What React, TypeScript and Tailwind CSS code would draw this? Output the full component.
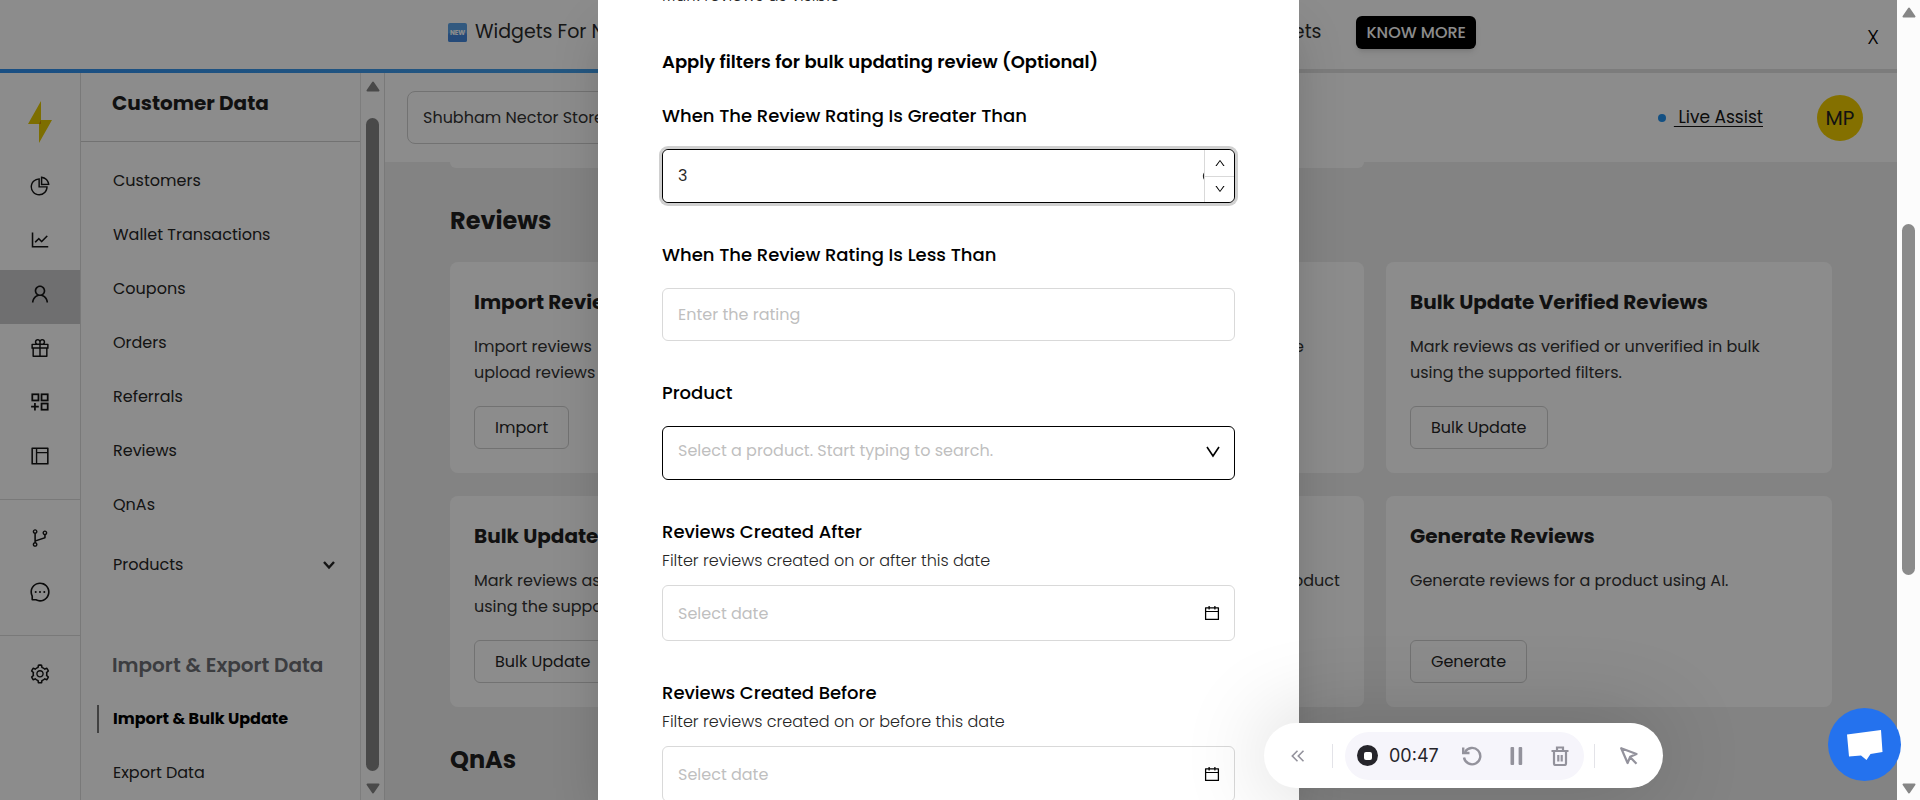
import React from "react";
import {
  AiOutlinePieChart,
  AiOutlineLineChart,
  AiOutlineUser,
  AiOutlineGift,
  AiOutlineLayout,
  AiOutlineBranches,
  AiOutlineMessage,
  AiOutlineSetting,
  AiOutlineCalendar,
  AiOutlineUp,
  AiOutlineDown,
  AiFillCloseCircle,
} from "react-icons/ai";

type IconType = React.ComponentType<{ className?: string; style?: React.CSSProperties }>;

function AppsIcon() {
  return (
    <svg viewBox="0 0 20 20" className="size-[22px] text-[#141414]" fill="none" stroke="currentColor" strokeWidth="1.6" aria-hidden="true">
      <rect x="3" y="3" width="5.6" height="5.6" />
      <rect x="11.4" y="3" width="5.6" height="5.6" />
      <rect x="11.4" y="11.4" width="5.6" height="5.6" />
      <path d="M5.4 10.8 V17.8 M1.9 14.3 H8.9" />
    </svg>
  );
}

function RailItem({ icon: Icon, label, active }: { icon: IconType; label: string; active?: boolean }) {
  return (
    <a
      href="#"
      aria-label={label}
      className={`flex h-[54px] w-full shrink-0 items-center justify-center pb-1.5 ${active ? "bg-[#cbcacd]" : ""}`}
    >
      <Icon className="size-[22px] text-[#141414]" />
    </a>
  );
}

function Rail() {
  return (
    <nav aria-label="Main" className="flex w-[81px] shrink-0 flex-col border-r border-[#dcdcdc]">
      <div className="flex h-[89px] shrink-0 items-center justify-center pt-2">
        <svg viewBox="0 0 24 42" className="h-[42px] w-6" aria-hidden="true">
          <path d="M13 0 L0 23 H11 L11 42 L24 19 H13 Z" fill="#e4c800" />
          <path d="M13 19 V23 H11 Z" fill="#d08a00" />
        </svg>
      </div>
      <div className="flex flex-col border-b border-[#dcdcdc] pb-[13px]">
        <RailItem icon={AiOutlinePieChart} label="Overview" />
        <RailItem icon={AiOutlineLineChart} label="Analytics" />
        <RailItem icon={AiOutlineUser} label="Customers" active />
        <RailItem icon={AiOutlineGift} label="Rewards" />
        <RailItem icon={AppsIcon} label="Apps" />
        <RailItem icon={AiOutlineLayout} label="Layout" />
      </div>
      <div className="flex flex-col border-b border-[#dcdcdc] pt-[14px] pb-[13px]">
        <RailItem icon={AiOutlineBranches} label="Workflows" />
        <RailItem icon={AiOutlineMessage} label="Messages" />
      </div>
      <div className="flex flex-col pt-[14px]">
        <RailItem icon={AiOutlineSetting} label="Settings" />
      </div>
    </nav>
  );
}

function MenuItem({ children }: { children: React.ReactNode }) {
  return (
    <a href="#" className="flex h-[54px] shrink-0 items-center pl-8 text-[#262626]">
      {children}
    </a>
  );
}

function ScrollArrow({ down }: { down?: boolean }) {
  return (
    <svg viewBox="0 0 14 11" className={`h-[11px] w-3.5 shrink-0 ${down ? "rotate-180" : ""}`} aria-hidden="true">
      <path d="M7 1.5 L12.5 9.5 H1.5 Z" fill="#868686" stroke="#868686" strokeWidth="2" strokeLinejoin="round" />
    </svg>
  );
}

function SideMenu() {
  return (
    <div className="flex w-[304px] shrink-0 border-r border-[#dcdcdc]">
      <nav aria-label="Customer data" className="flex min-w-0 grow flex-col text-base">
        <h2 className="flex h-[69px] shrink-0 items-center border-b border-[#cfcfcf] pb-2 pl-[31px] text-xl font-bold text-[#1f1f1f]">
          Customer Data
        </h2>
        <div className="flex flex-col pt-3">
          <MenuItem>Customers</MenuItem>
          <MenuItem>Wallet Transactions</MenuItem>
          <MenuItem>Coupons</MenuItem>
          <MenuItem>Orders</MenuItem>
          <MenuItem>Referrals</MenuItem>
          <MenuItem>Reviews</MenuItem>
          <MenuItem>QnAs</MenuItem>
          <button type="button" className="flex h-[66px] shrink-0 items-center justify-between pr-6 pl-8 text-[#262626]">
            Products
            <svg viewBox="0 0 14 10" className="h-2.5 w-3.5" fill="none" stroke="#262626" strokeWidth="2.4" aria-hidden="true">
              <path d="M2 2 L7 7.5 L12 2" />
            </svg>
          </button>
        </div>
        <h3 className="mt-10 flex h-[54px] shrink-0 items-center pl-[31px] text-xl font-semibold text-[#6d7075]">
          Import &amp; Export Data
        </h3>
        <a href="#" aria-current="page" className="flex h-[54px] shrink-0 items-center pl-4 font-bold text-black">
          <span className="flex h-7 items-center border-l-2 border-[#777] pl-3.5">Import &amp; Bulk Update</span>
        </a>
        <MenuItem>Export Data</MenuItem>
      </nav>
      <div className="flex w-6 shrink-0 flex-col items-center border-l border-[#e4e4e4] pt-2 pb-1.5">
        <ScrollArrow />
        <div className="mt-[26px] mb-3 w-[13px] grow rounded-full bg-[#868686]" />
        <ScrollArrow down />
      </div>
    </div>
  );
}

function Banner() {
  return (
    <div className="flex shrink-0 flex-col">
      <div className="flex h-[69px] items-center px-4">
        <div className="flex grow items-center justify-between pr-[405px] pl-[432px] pb-1">
          <p className="flex items-center gap-2 text-[19px] whitespace-nowrap text-[#2b2b2b]">
            <svg viewBox="0 0 19 19" className="size-[19px]" aria-hidden="true">
              <rect width="19" height="19" rx="2" fill="#5ba3e8" />
              <rect y="10" width="19" height="9" rx="2" fill="#4488dd" />
              <text x="9.5" y="12" textAnchor="middle" fontSize="6.5" fontWeight="700" fill="#fff">NEW</text>
            </svg>
            Widgets For New Pages
          </p>
          <p className="flex items-center gap-[35px] text-[19px] text-[#2b2b2b]">
            Widgets
            <button type="button" className="h-[33px] rounded-md bg-black px-2.5 text-base font-medium text-white shadow-md">
              KNOW MORE
            </button>
          </p>
        </div>
        <button type="button" aria-label="Close announcement" className="-ml-4 flex w-4 items-center justify-center pt-1 text-xl font-light">
          X
        </button>
      </div>
      <div className="h-1 bg-[#e2e2e2]">
        <div className="h-full w-1/2 bg-linear-to-r from-[#2f90ee] to-[#50a8e8]" />
      </div>
    </div>
  );
}

function Card({ title, text, action }: { title: string; text: string; action: string }) {
  return (
    <article className="flex h-[211px] flex-col items-start rounded-lg bg-white p-6">
      <h3 className="text-xl leading-8 font-bold whitespace-nowrap text-[#1f1f1f]">{title}</h3>
      <p className="mt-4 grow text-base leading-[26px] whitespace-pre-line text-[#333]">{text}</p>
      <button type="button" className="h-[43px] rounded-md border border-[#d0d0d0] px-5 text-base text-[#262626]">
        {action}
      </button>
    </article>
  );
}

function Content() {
  return (
    <div className="flex min-w-0 grow flex-col bg-[#efefef]">
      <header className="flex h-[89px] shrink-0 items-center justify-between bg-white pr-[34px] pl-[22px]">
        <select
          aria-label="Store"
          className="h-[53px] w-80 appearance-none rounded-lg border border-[#d0d0d0] bg-white px-[15px] text-base text-[#333]"
        >
          <option>Shubham Nector Store</option>
        </select>
        <div className="flex items-center">
          <span className="mr-2 size-2 rounded-full bg-[#2492ee]" />
          <a href="#" className="text-[17px] whitespace-pre text-[#141414] underline underline-offset-3"> Live Assist</a>
          <span className="ml-[54px] flex size-[46px] items-center justify-center rounded-full bg-[#f0cd00] text-xl text-[#222]">MP</span>
        </div>
      </header>
      <main className="flex flex-col px-[65px]">
        <div className="grid grid-cols-3 gap-[22px]">
          <div className="h-1.5 rounded-b-lg bg-white" />
          <div className="h-1.5 rounded-b-lg bg-white" />
        </div>
        <h2 className="flex h-[94px] items-center pt-3 text-2xl font-bold text-[#1f1f1f]">Reviews</h2>
        <div className="grid grid-cols-3 gap-x-[22px] gap-y-[23px]">
          <Card title="Import Reviews" text={"Import reviews\nupload reviews file"} action="Import" />
          <Card title="Export Reviews" text={"Export reviews in bulk and download it as one\nfile."} action="Export" />
          <Card
            title="Bulk Update Verified Reviews"
            text={"Mark reviews as verified or unverified in bulk\nusing the supported filters."}
            action="Bulk Update"
          />
          <Card title="Bulk Update" text={"Mark reviews as visible\nusing the supported filters."} action="Bulk Update" />
          <Card title="Move Reviews" text="Move or copy reviews in bulk into another product" action="Move" />
          <Card title="Generate Reviews" text="Generate reviews for a product using AI." action="Generate" />
        </div>
        <h2 className="flex h-[94px] items-center pt-3 text-2xl font-bold text-[#1f1f1f]">QnAs</h2>
      </main>
    </div>
  );
}

const labelClass = "block text-lg leading-7 font-medium text-black";
const hintClass = "text-base leading-6 font-light text-[#262626]";
const fieldClass = "w-full rounded-md border border-[#d9d9d9] bg-white px-[15px] text-base placeholder:text-[#bfbfbf]";

function DateField({ id, label, hint }: { id: string; label: string; hint: string }) {
  return (
    <div className="flex flex-col">
      <label htmlFor={id} className={labelClass}>{label}</label>
      <p className={`mt-[3px] ${hintClass}`}>{hint}</p>
      <div className="relative mt-3">
        <input id={id} placeholder="Select date" className={`h-14 ${fieldClass}`} />
        <AiOutlineCalendar className="absolute top-[19px] right-[14px] size-[18px] text-black" />
      </div>
    </div>
  );
}

function Dialog() {
  return (
    <div
      role="dialog"
      aria-label="Bulk update reviews"
      className="flex h-full w-[701px] shrink-0 flex-col gap-[38px] overflow-hidden bg-white px-16 shadow-2xl"
    >
      <div className="-mt-4 flex flex-col">
        <p className={hintClass}>Mark reviews as visible</p>
        <h2 className="mt-10 text-lg leading-7 font-semibold text-black">Apply filters for bulk updating review (Optional)</h2>
        <label htmlFor="greater" className={`mt-[26px] ${labelClass}`}>When The Review Rating Is Greater Than</label>
        <div className="relative mt-[19px] flex h-[54px] rounded-md border border-black shadow-[0_0_0_3px_#d0d0d0]">
          <input
            id="greater"
            type="number"
            defaultValue={3}
            className="min-w-0 grow [appearance:textfield] rounded-l-md bg-white px-[15px] text-base text-[#262626] outline-none"
          />
          <AiFillCloseCircle className="absolute top-[19px] right-[18px] size-3.5 text-[#222]" />
          <div className="relative flex w-[30px] flex-col rounded-r-md border-l border-[#d9d9d9] bg-white">
            <button type="button" aria-label="Increase" className="flex grow items-center justify-center border-b border-[#d9d9d9]">
              <AiOutlineUp className="size-3" />
            </button>
            <button type="button" aria-label="Decrease" className="flex grow items-center justify-center">
              <AiOutlineDown className="size-3" />
            </button>
          </div>
        </div>
      </div>
      <div className="flex flex-col">
        <label htmlFor="less" className={labelClass}>When The Review Rating Is Less Than</label>
        <input id="less" placeholder="Enter the rating" className={`mt-[19px] h-[53px] ${fieldClass}`} />
      </div>
      <div className="flex flex-col">
        <label htmlFor="product" className={labelClass}>Product</label>
        <div className="relative mt-[19px]">
          <select
            id="product"
            className="h-[54px] w-full appearance-none rounded-md border border-black bg-white px-[15px] pb-1 text-base text-[#bfbfbf]"
          >
            <option>Select a product. Start typing to search.</option>
          </select>
          <svg
            viewBox="0 0 14 12"
            className="pointer-events-none absolute top-5 right-[15px] h-3 w-3.5"
            fill="none"
            stroke="#000"
            strokeWidth="1.6"
            aria-hidden="true"
          >
            <path d="M1 1 L7 10 L13 1" />
          </svg>
        </div>
      </div>
      <DateField id="after" label="Reviews Created After" hint="Filter reviews created on or after this date" />
      <DateField id="before" label="Reviews Created Before" hint="Filter reviews created on or before this date" />
    </div>
  );
}

function Recorder() {
  return (
    <div className="fixed right-[257px] bottom-3 z-20 flex h-[65px] w-[399px] items-center rounded-full bg-white text-[#93929c] shadow-[0_0_90px_rgba(0,0,0,0.2)]">
      <button type="button" aria-label="Collapse" className="flex w-[68px] justify-center">
        <svg viewBox="0 0 14 12" className="h-3 w-3.5" fill="none" stroke="currentColor" strokeWidth="1.6" aria-hidden="true">
          <path d="M6.5 0.8 L1.3 6 L6.5 11.2 M12.5 0.8 L7.3 6 L12.5 11.2" />
        </svg>
      </button>
      <span className="h-6 w-px bg-[#e3e3e8]" />
      <div className="ml-3 flex h-12 w-[239px] items-center rounded-full bg-[#f6f5fb] pl-3">
        <button type="button" aria-label="Stop" className="flex size-[21px] items-center justify-center rounded-full bg-[#26252b]">
          <span className="size-2 rounded-xs bg-white" />
        </button>
        <span className="ml-[11px] w-[52px] font-['Inter',sans-serif] text-lg text-[#26252b]">00:47</span>
        <div className="ml-[21px] flex items-center gap-7">
          <button type="button" aria-label="Restart">
            <svg viewBox="0 0 20 20" className="size-5" fill="none" stroke="currentColor" strokeWidth="2.4" aria-hidden="true">
              <path d="M3 6 A8.2 8.2 0 1 1 2 11.5" />
              <path d="M1.2 1.5 V7 H7.5" />
            </svg>
          </button>
          <button type="button" aria-label="Pause">
            <svg viewBox="0 0 13 18" className="h-[18px] w-[13px]" fill="currentColor" aria-hidden="true">
              <rect x="0.5" width="3.6" height="18" rx="1" />
              <rect x="8.6" width="3.6" height="18" rx="1" />
            </svg>
          </button>
          <button type="button" aria-label="Delete">
            <svg viewBox="0 0 18 20" className="h-5 w-[18px]" fill="none" stroke="currentColor" strokeWidth="2.2" aria-hidden="true">
              <path d="M0.5 5 H17.5 M6 5 V1.5 H12 V5 M3 5 V17.5 Q3 19 4.5 19 H13.5 Q15 19 15 17.5 V5 M7.3 9 V15.5 M10.7 9 V15.5" />
            </svg>
          </button>
        </div>
      </div>
      <span className="ml-2.5 h-6 w-px bg-[#e3e3e8]" />
      <button type="button" aria-label="Pointer" className="flex grow justify-center">
        <svg viewBox="0 0 18 18" className="size-[18px]" fill="none" stroke="currentColor" strokeWidth="2.2" strokeLinejoin="round" aria-hidden="true">
          <path d="M1.2 1.2 L16.5 7 L10.2 9.8 L7.6 16 Z M10 10 L16.5 16.8" />
        </svg>
      </button>
    </div>
  );
}

export default function App() {
  return (
    <div className="relative flex h-screen overflow-hidden bg-white font-['Poppins','Inter',sans-serif]">
      <div className="relative flex min-w-0 grow flex-col overflow-hidden">
        <Banner />
        <div className="flex min-h-0 grow">
          <Rail />
          <SideMenu />
          <Content />
        </div>
        <div className="absolute inset-0 z-10 flex justify-center bg-black/45">
          <Dialog />
        </div>
      </div>
      <div className="flex w-[23px] shrink-0 flex-col items-center bg-[#fcfcfc] pt-[7px] pb-1.5">
        <ScrollArrow />
        <div className="flex grow flex-col pt-[206px]">
          <div className="h-[351px] w-[13px] rounded-full bg-[#8b8b8b]" />
        </div>
        <ScrollArrow down />
      </div>
      <Recorder />
      <button
        type="button"
        aria-label="Open chat"
        className="fixed right-[19px] bottom-[19px] z-20 flex size-[73px] items-center justify-center rounded-full bg-[#2472ee]"
      >
        <svg viewBox="0 0 38 32" className="h-8 w-[38px]" aria-hidden="true">
          <path d="M1 5.5 L35 1 L36.5 23 L24.5 25 L20.5 31 L15 26.5 L3 27.5 Z" fill="#fff" />
        </svg>
      </button>
    </div>
  );
}
